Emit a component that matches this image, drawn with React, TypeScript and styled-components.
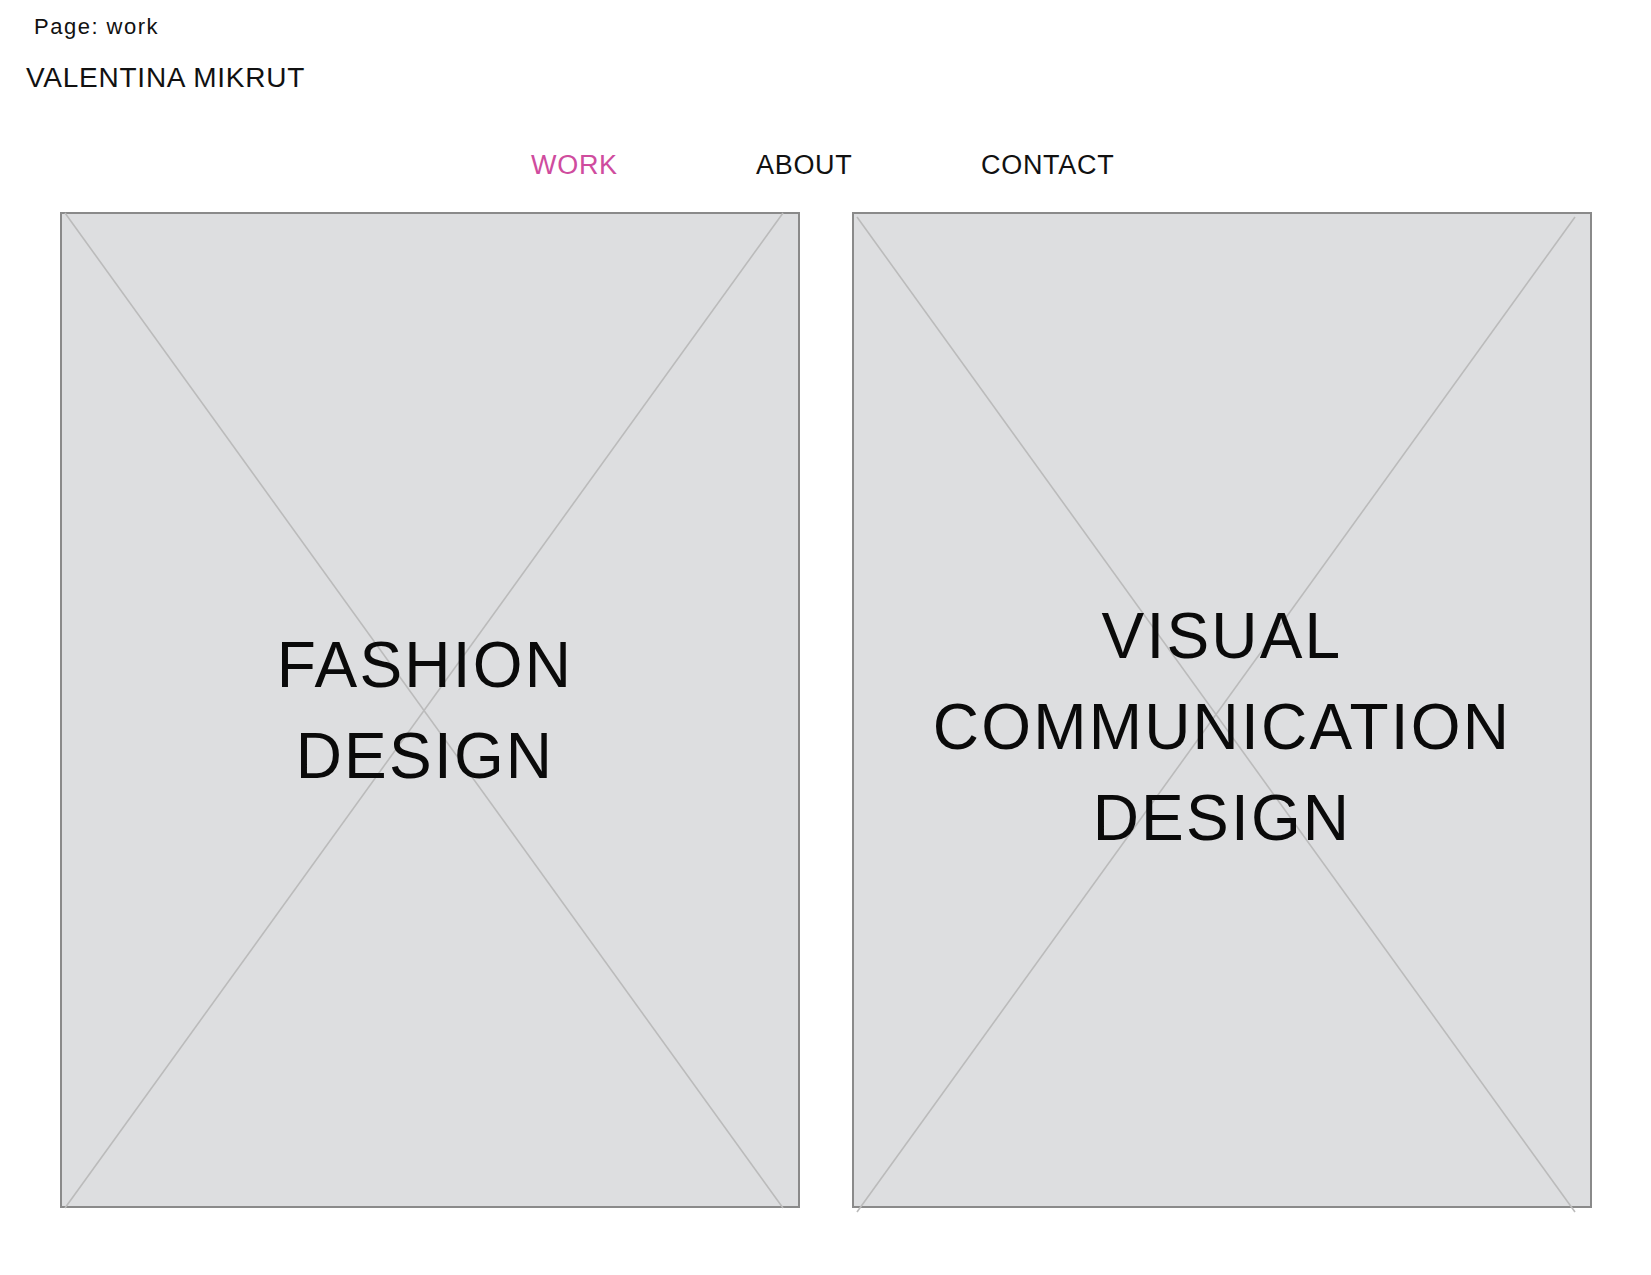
import React from "react";
import styled, { createGlobalStyle } from "styled-components";

const GlobalStyle = createGlobalStyle`
  html, body {
    margin: 0;
    padding: 0;
    background: #ffffff;
  }
  body {
    font-family: "Liberation Sans", Arial, Helvetica, sans-serif;
    color: #111111;
  }
`;

const Page = styled.div`
  width: 1651px;
  min-height: 1275px;
  display: flex;
  flex-direction: column;
`;

const PageLabel = styled.div`
  margin-top: 16px;
  padding-left: 34px;
  font-size: 22px;
  line-height: 22px;
  letter-spacing: 1.5px;
  color: #111;
`;

const Brand = styled.div`
  margin-top: 26px;
  padding-left: 26px;
  font-size: 28px;
  line-height: 28px;
  letter-spacing: 0.75px;
  color: #111;
`;

const Nav = styled.nav`
  margin-top: 60px;
  padding-left: 531px;
  display: flex;
`;

const NavItem = styled.a<{ $active?: boolean }>`
  width: 225px;
  font-size: 27px;
  line-height: 27px;
  letter-spacing: 0.7px;
  text-decoration: none;
  color: ${(p) => (p.$active ? "#cf4c9e" : "#111")};
`;

const Grid = styled.main`
  margin-top: 33px;
  padding-left: 60px;
  display: grid;
  grid-template-columns: 740px 740px;
  column-gap: 52px;
`;

const Card = styled.div`
  position: relative;
  height: 996px;
  box-sizing: border-box;
  border: 2px solid #8a8a8a;
  background: #dddee0;
  display: flex;
  align-items: center;
  justify-content: center;
`;

const Cross = styled.svg<{ $top: number }>`
  position: absolute;
  left: 2px;
  top: ${(p) => p.$top}px;
  width: 720px;
  height: 997px;
  overflow: visible;
  pointer-events: none;
`;

const Label = styled.h2<{ $dx: number; $dy: number }>`
  position: relative;
  margin: 0;
  font-weight: 400;
  font-size: 64px;
  line-height: 91px;
  letter-spacing: 2.2px;
  text-align: center;
  color: #0a0a0a;
  transform: translate(${(p) => p.$dx}px, ${(p) => p.$dy}px);
`;

type Work = { lines: string[]; crossTop: number; dx: number; dy: number };

const works: Work[] = [
  { lines: ["FASHION", "DESIGN"], crossTop: -2, dx: -5, dy: 1 },
  { lines: ["VISUAL", "COMMUNICATION", "DESIGN"], crossTop: 2, dx: 0, dy: 17 },
];

const Placeholder: React.FC<{ top: number }> = ({ top }) => (
  <Cross $top={top} viewBox="0 0 720 997" preserveAspectRatio="none">
    <line x1="1" y1="1" x2="719" y2="996" stroke="#bbbbbb" strokeWidth="1.6" />
    <line x1="719" y1="1" x2="1" y2="996" stroke="#bbbbbb" strokeWidth="1.6" />
  </Cross>
);

export default function App() {
  return (
    <>
      <GlobalStyle />
      <Page>
        <PageLabel>Page: work</PageLabel>
        <Brand>VALENTINA MIKRUT</Brand>
        <Nav>
          <NavItem $active>WORK</NavItem>
          <NavItem>ABOUT</NavItem>
          <NavItem>CONTACT</NavItem>
        </Nav>
        <Grid>
          {works.map((w, i) => (
            <Card key={i}>
              <Placeholder top={w.crossTop} />
              <Label $dx={w.dx} $dy={w.dy}>
                {w.lines.map((l, j) => (
                  <React.Fragment key={j}>
                    {l}
                    {j < w.lines.length - 1 && <br />}
                  </React.Fragment>
                ))}
              </Label>
            </Card>
          ))}
        </Grid>
      </Page>
    </>
  );
}
